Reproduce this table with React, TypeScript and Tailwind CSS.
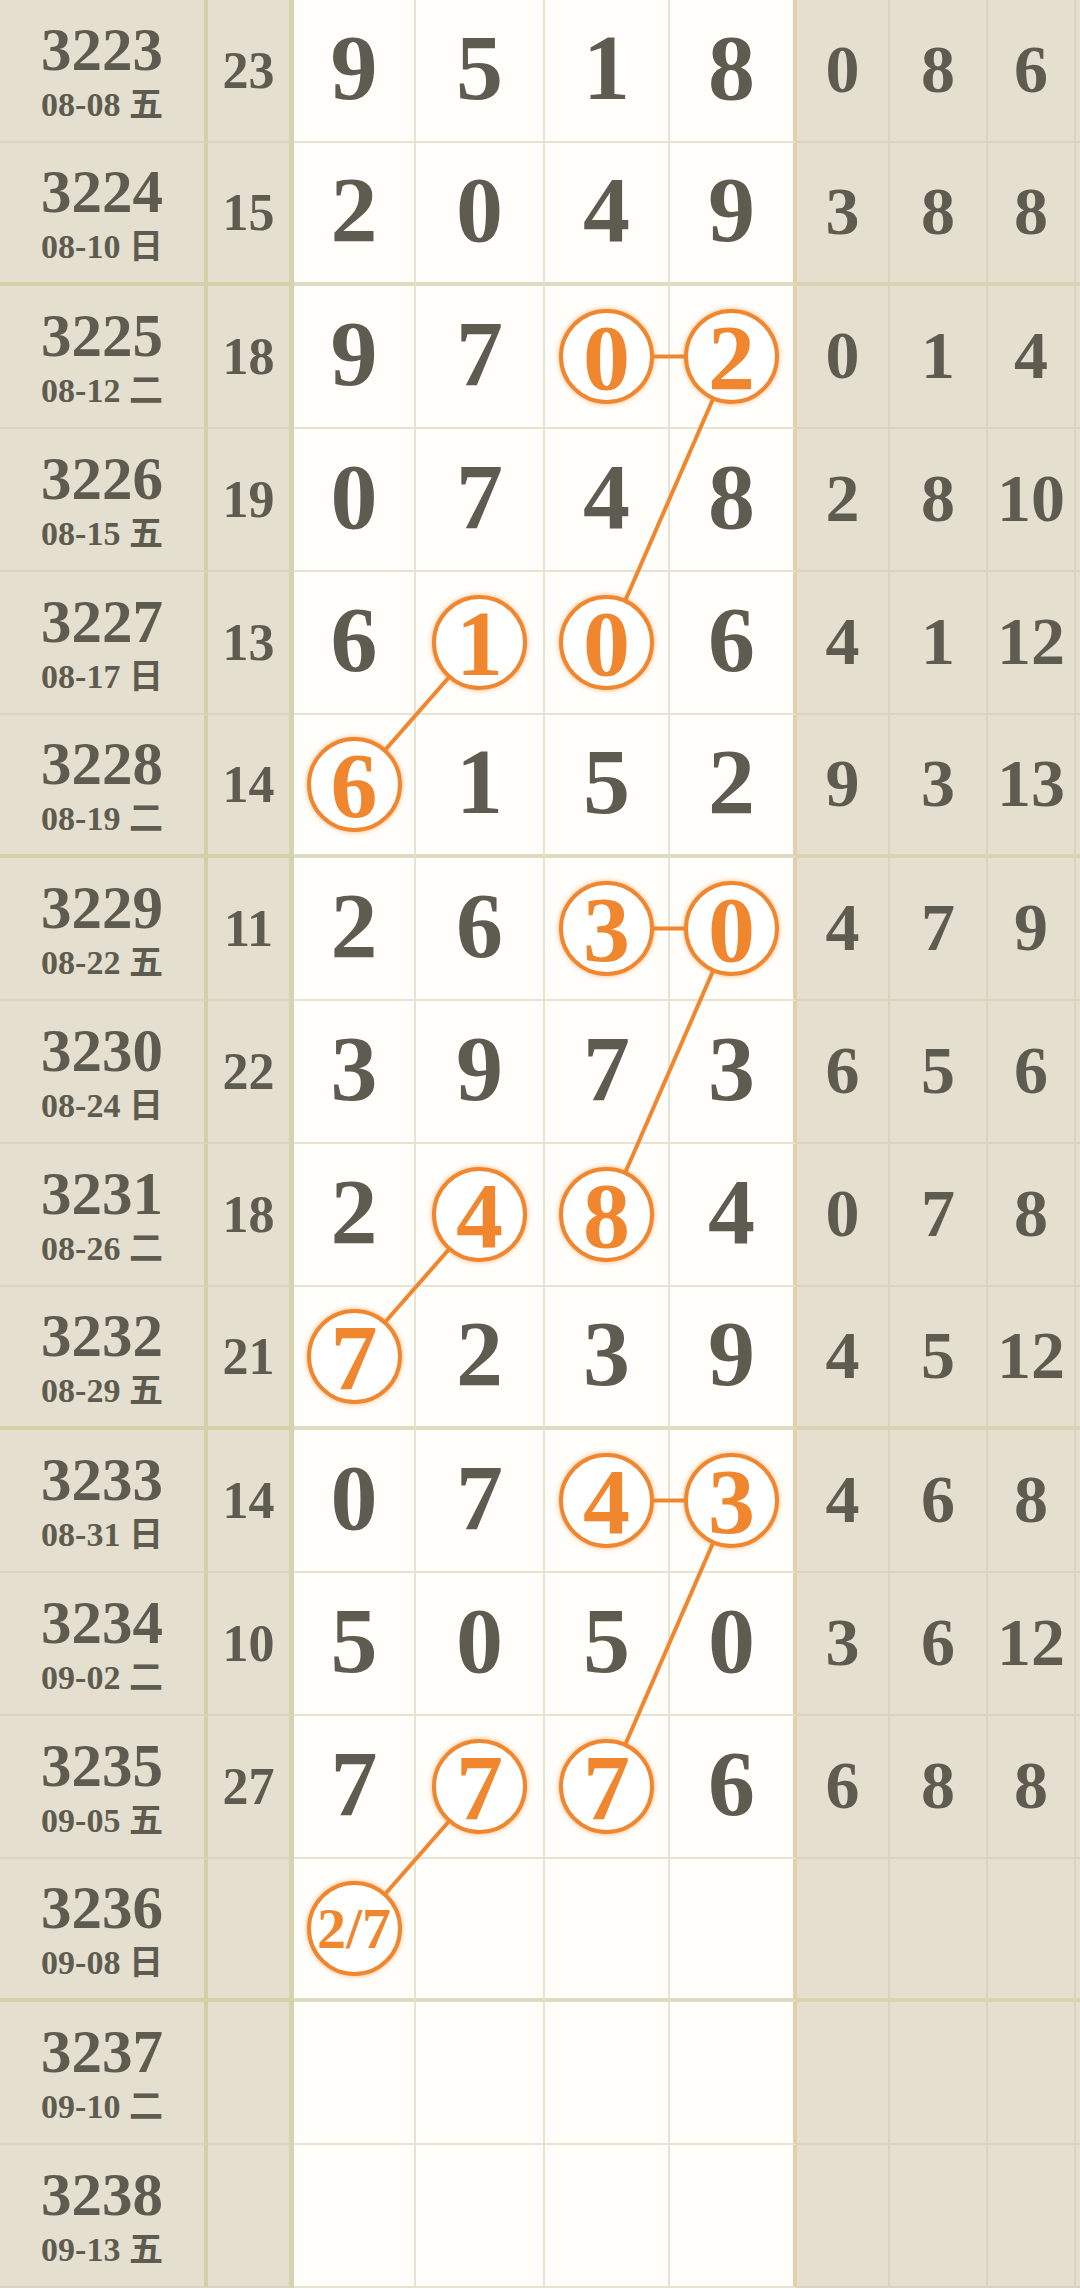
import React from "react";

type Row = {
  issue: string;
  date: string;
  wd: string;
  sum: string;
  d: string[];
  r: string[];
};

const rows: Row[] = [
  { issue: "3223", date: "08-08", wd: "五", sum: "23", d: ["9", "5", "1", "8"], r: ["0", "8", "6"] },
  { issue: "3224", date: "08-10", wd: "日", sum: "15", d: ["2", "0", "4", "9"], r: ["3", "8", "8"] },
  { issue: "3225", date: "08-12", wd: "二", sum: "18", d: ["9", "7", "0", "2"], r: ["0", "1", "4"] },
  { issue: "3226", date: "08-15", wd: "五", sum: "19", d: ["0", "7", "4", "8"], r: ["2", "8", "10"] },
  { issue: "3227", date: "08-17", wd: "日", sum: "13", d: ["6", "1", "0", "6"], r: ["4", "1", "12"] },
  { issue: "3228", date: "08-19", wd: "二", sum: "14", d: ["6", "1", "5", "2"], r: ["9", "3", "13"] },
  { issue: "3229", date: "08-22", wd: "五", sum: "11", d: ["2", "6", "3", "0"], r: ["4", "7", "9"] },
  { issue: "3230", date: "08-24", wd: "日", sum: "22", d: ["3", "9", "7", "3"], r: ["6", "5", "6"] },
  { issue: "3231", date: "08-26", wd: "二", sum: "18", d: ["2", "4", "8", "4"], r: ["0", "7", "8"] },
  { issue: "3232", date: "08-29", wd: "五", sum: "21", d: ["7", "2", "3", "9"], r: ["4", "5", "12"] },
  { issue: "3233", date: "08-31", wd: "日", sum: "14", d: ["0", "7", "4", "3"], r: ["4", "6", "8"] },
  { issue: "3234", date: "09-02", wd: "二", sum: "10", d: ["5", "0", "5", "0"], r: ["3", "6", "12"] },
  { issue: "3235", date: "09-05", wd: "五", sum: "27", d: ["7", "7", "7", "6"], r: ["6", "8", "8"] },
  { issue: "3236", date: "09-08", wd: "日", sum: "", d: ["2/7", "", "", ""], r: ["", "", ""] },
  { issue: "3237", date: "09-10", wd: "二", sum: "", d: ["", "", "", ""], r: ["", "", ""] },
  { issue: "3238", date: "09-13", wd: "五", sum: "", d: ["", "", "", ""], r: ["", "", ""] },
];

const circled = new Set([
  "2-2", "2-3", "4-1", "4-2", "5-0",
  "6-2", "6-3", "8-1", "8-2", "9-0",
  "10-2", "10-3", "12-1", "12-2", "13-0",
]);

const groupEnd = new Set([1, 5, 9, 13]);

const X = [354, 479.5, 607, 731.5];
const ROW_H = 143;
const cy = (r: number) => r * ROW_H + 70.5;

const segs: [number, number, number, number][] = [];
[2, 6, 10].forEach((b) => {
  segs.push([b, 2, b, 3]);
  segs.push([b, 3, b + 2, 2]);
  segs.push([b + 2, 1, b + 3, 0]);
});

const digitWidths = ["w-[122px]", "w-[129px]", "w-[125px]", "w-[127px]"];
const rightWidths = ["w-[93px]", "w-[98px]", "w-[88px]"];

export default function App() {
  return (
    <div
      className="w-[1080px] bg-[#e4dfce] text-[#5e5c50]"
      style={{ fontFamily: "'Liberation Serif', 'Noto Sans CJK SC', serif" }}
    >
      <div className="relative">
        {rows.map((row, ri) => {
          const g = groupEnd.has(ri);
          const tanB = g ? "border-b-4 border-b-[#d5d1a8]" : "border-b-2 border-b-[#dad4bd]";
          const whiteB = g ? "border-b-4 border-b-[#dddbc2]" : "border-b-2 border-b-[#e6e3d0]";
          const rightB = g ? "border-b-4 border-b-[#d8d3b0]" : "border-b-2 border-b-[#dad3bf]";
          return (
            <div key={ri} className="flex h-[143px]">
              <div
                className={`w-[208px] border-r-4 border-r-[#d3d0a6] ${tanB} flex flex-col items-center justify-center font-bold`}
              >
                <div className="text-[61px] leading-none">{row.issue}</div>
                <div className="mt-2 text-[34px] leading-none whitespace-nowrap">
                  {row.date} {row.wd}
                </div>
              </div>
              <div
                className={`w-[86px] border-r-[5px] border-r-[#d6d4ae] ${tanB} flex items-center justify-center font-bold text-[52px] leading-none`}
              >
                {row.sum}
              </div>
              {row.d.map((v, ci) => {
                const isC = circled.has(`${ri}-${ci}`);
                const last = ci === 3;
                return (
                  <div
                    key={ci}
                    className={`${digitWidths[ci]} bg-[#fffefa] ${whiteB} ${
                      last ? "border-r-4 border-r-[#e5cfab]" : "border-r-2 border-r-[#e6e3d0]"
                    } flex items-center justify-center font-bold leading-none`}
                  >
                    {isC ? (
                      <div className="relative z-10 w-[95px] h-[95px] shrink-0 rounded-full border-4 border-[#f0862d] bg-white flex items-center justify-center text-[#f0862d] shadow-[0_0_5px_rgba(240,134,45,0.6)]">
                        <span className={v.length > 1 ? "text-[58px] leading-none" : "text-[94px] leading-none"}>{v}</span>
                      </div>
                    ) : (
                      <span className="text-[94px] leading-none pb-2">{v}</span>
                    )}
                  </div>
                );
              })}
              {row.r.map((v, ci) => (
                <div
                  key={ci}
                  className={`${rightWidths[ci]} ${rightB} border-r-2 border-r-[#dad3bf] flex items-center justify-center font-bold text-[68px] leading-none`}
                >
                  <span className="pb-1">{v}</span>
                </div>
              ))}
              <div className={`flex-1 ${rightB}`} />
            </div>
          );
        })}
        <svg
          className="absolute left-0 top-0 z-0 pointer-events-none"
          width={1080}
          height={2289}
          viewBox="0 0 1080 2289"
        >
          {segs.map(([r1, c1, r2, c2], i) => (
            <line
              key={i}
              x1={X[c1]}
              y1={cy(r1)}
              x2={X[c2]}
              y2={cy(r2)}
              stroke="#f0862d"
              strokeWidth={4}
            />
          ))}
        </svg>
      </div>
    </div>
  );
}
